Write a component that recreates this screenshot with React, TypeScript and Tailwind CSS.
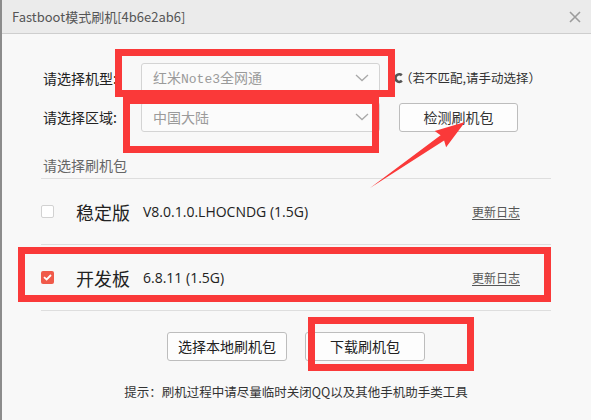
import React from 'react';

const Chevron = () => (
  <svg width="14" height="8" viewBox="0 0 14 8" className="shrink-0">
    <path d="M1 1l6 5.5L13 1" fill="none" stroke="#a9a9a9" strokeWidth="1.3" />
  </svg>
);

const Select = ({ children }: { children: React.ReactNode }) => (
  <div className="w-[239px] h-[30px] bg-[#fbfbfb] border border-[#d4d4d4] rounded-[3px] flex items-center justify-between pl-[11px] pr-[10px] text-[14px] text-[#9a9a9a]">
    <span className="leading-none">{children}</span>
    <Chevron />
  </div>
);

const UpdateLog = () => (
  <span className="ml-auto mr-[31px] text-[12px] text-[#555] underline underline-offset-2">更新日志</span>
);

export default function App() {
  return (
    <div className="relative w-[591px] h-[420px] overflow-hidden bg-[#f8f8f8] border-l-2 border-[#8c8c8c] font-['Noto_Sans_CJK_SC',sans-serif] text-[#222]">
      {/* title bar */}
      <div className="h-[34px] bg-[#ebebeb] border-b border-[#cecece] flex items-center justify-between pl-[10px] pr-[10px]">
        <span className="text-[13px] text-[#555]">Fastboot模式刷机[4b6e2ab6]</span>
        <svg width="12" height="12" viewBox="0 0 12 12">
          <path d="M1 1l10 10M11 1L1 11" stroke="#9c9c9c" strokeWidth="1.6" />
        </svg>
      </div>

      <div className="pl-[39px] pr-[40px]">
        {/* model */}
        <div className="mt-[29px] flex items-center h-[30px]">
          <span className="w-[100px] pl-[2px] text-[14px] leading-none">请选择机型:</span>
          <Select>
            红米<span className="font-['Liberation_Mono',monospace] text-[13px]">Note3</span>全网通
          </Select>
          <svg width="9" height="12" viewBox="0 0 9 12" className="ml-[14px] shrink-0">
            <path d="M7.8 3.2A3.8 3.8 0 1 0 7.9 8.8" fill="none" stroke="#555" strokeWidth="2.6" />
          </svg>
          <span className="-ml-[3px] text-[12.5px] text-[#333] whitespace-nowrap">（若不匹配,请手动选择）</span>
        </div>

        {/* region */}
        <div className="mt-[9px] flex items-center h-[30px]">
          <span className="w-[100px] pl-[2px] text-[14px] leading-none">请选择区域:</span>
          <Select>中国大陆</Select>
          <button className="ml-[19px] w-[119px] h-[29px] bg-[#fdfdfd] border border-[#bdbdbd] rounded-[3px] text-[14px] text-[#333]">
            检测刷机包
          </button>
        </div>

        <div className="mt-[23px] pl-[2px] text-[14px] leading-[20px] text-[#666]">请选择刷机包</div>

        {/* packages */}
        <div className="mt-[3px] border-t border-[#dedede]">
          <div className="h-[66px] flex items-center border-b border-[#dedede]">
            <span className="w-[13px] h-[13px] bg-white border border-[#d2d2d2] rounded-[2px]" />
            <span className="ml-[22px] text-[18px] leading-none">稳定版</span>
            <span className="ml-[13px] text-[14px] font-['Open_Sans',sans-serif] text-[#222]">V8.0.1.0.LHOCNDG (1.5G)</span>
            <UpdateLog />
          </div>
          <div className="h-[66px] flex items-center border-b border-[#dedede]">
            <span className="w-[13px] h-[13px] bg-[#f05a4a] rounded-[2px] flex items-center justify-center">
              <svg width="9" height="7" viewBox="0 0 9 7">
                <path d="M1 3.2l2.6 2.3L8 1" fill="none" stroke="#fff" strokeWidth="1.8" />
              </svg>
            </span>
            <span className="ml-[22px] text-[18px] leading-none">开发板</span>
            <span className="ml-[13px] text-[14px] font-['Open_Sans',sans-serif] text-[#222]">6.8.11 (1.5G)</span>
            <UpdateLog />
          </div>
        </div>

        <div className="mt-[21px] flex justify-center gap-[18px]">
          <button className="w-[120px] h-[29px] bg-[#fdfdfd] border border-[#bdbdbd] rounded-[3px] text-[14px] text-[#222]">
            选择本地刷机包
          </button>
          <button className="w-[120px] h-[29px] bg-[#fdfdfd] border border-[#bdbdbd] rounded-[3px] text-[14px] text-[#222]">
            下载刷机包
          </button>
        </div>

        <div className="mt-[22px] text-center text-[12.5px] leading-[18px] text-[#333]">
          提示：刷机过程中请尽量临时关闭QQ以及其他手机助手类工具
        </div>
      </div>

      {/* annotation overlays */}
      <div className="absolute left-[113px] top-[49px] w-[280px] h-[48px] border-[7px] border-[#fa3939]" />
      <div className="absolute left-[121px] top-[97px] w-[256px] h-[56px] border-[7px] border-[#fa3939]" />
      <div className="absolute left-[16px] top-[247px] w-[533px] h-[55px] border-[7px] border-[#fa3939]" />
      <div className="absolute left-[306px] top-[317px] w-[166px] h-[54px] border-[7px] border-[#fa3939]" />
      <svg className="absolute left-0 top-0" width="591" height="420" viewBox="-2 0 591 420">
        <polygon
          points="366,188 436.6,135.3 430.7,130.9 461,122 442.1,147.3 440.1,140.6"
          fill="#fa3939"
        />
      </svg>
    </div>
  );
}
